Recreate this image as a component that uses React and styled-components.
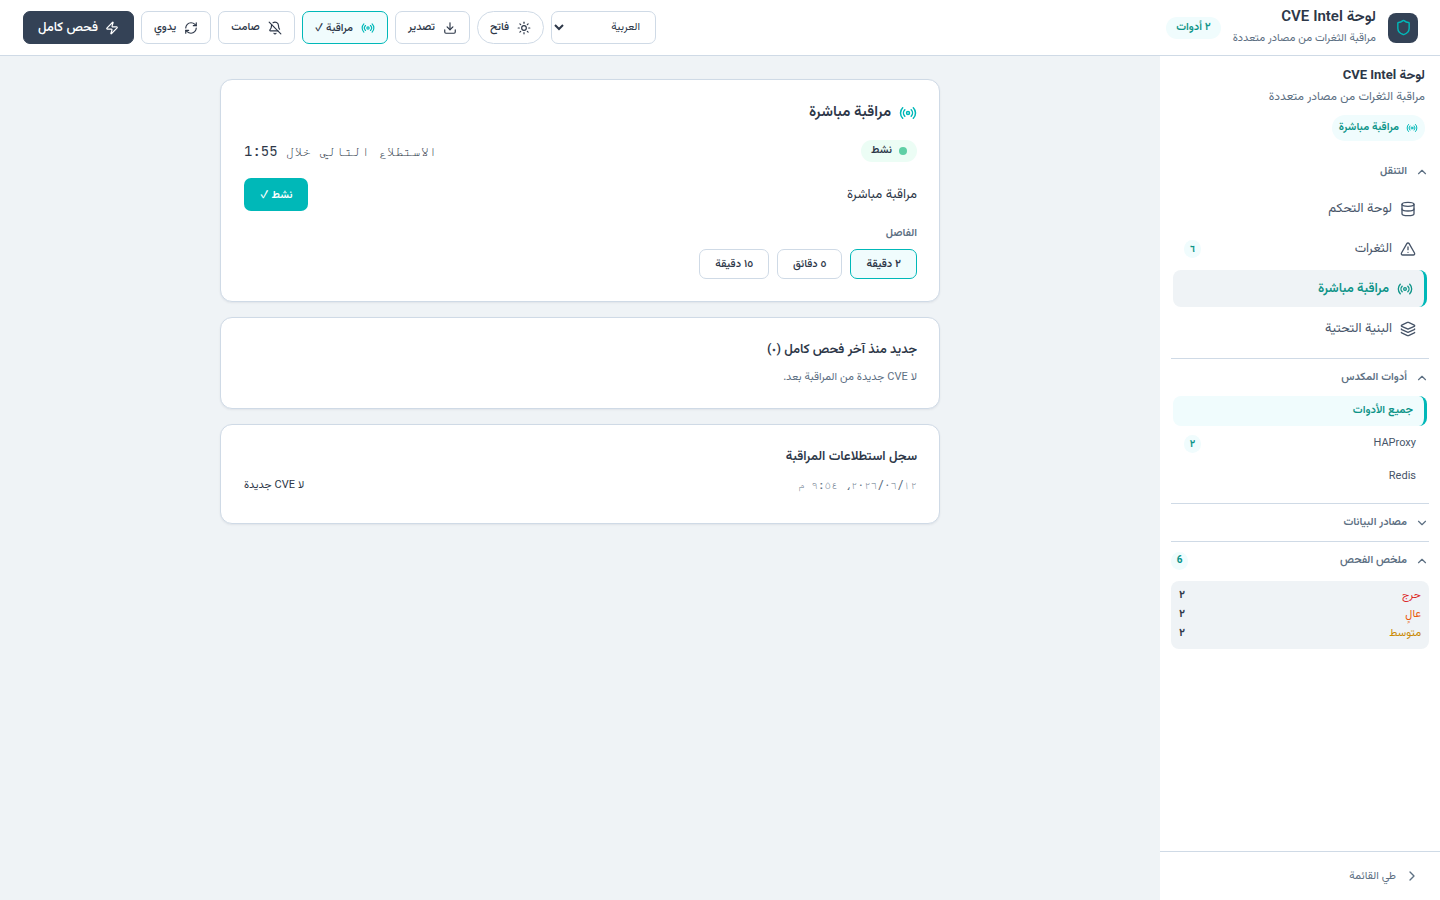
import React, { useState } from "react";
import styled, { createGlobalStyle, css } from "styled-components";
import {
  Shield, Zap, RefreshCw, BellOff, Radio, Download, Sun, Database,
  TriangleAlert, Layers, ChevronUp, ChevronDown, ChevronRight,
} from "lucide-react";

const c = {
  bg: "#eff3f6",
  panel: "#ffffff",
  border: "#cfdae6",
  ink: "#2d3748",
  dark: "#344256",
  muted: "#5d7083",
  nav: "#475569",
  teal: "#00b8b8",
  tealText: "#0d9488",
  tealBg: "#f0fcfd",
};

const GlobalStyle = createGlobalStyle`
  *, *::before, *::after { box-sizing: border-box; }
  body {
    margin: 0;
    background: ${c.bg};
    color: ${c.ink};
    font-family: Vazirmatn, "Noto Sans Math", Roboto, sans-serif;
    font-size: 13px;
    line-height: 20px;
  }
  button, select { font-family: inherit; color: inherit; cursor: pointer; }
  h1, h2, h3, p, ul, dl, dd { margin: 0; padding: 0; }
  ul { list-style: none; }
  svg { flex-shrink: 0; }
`;

const Page = styled.div`
  min-height: 100vh;
  display: flex;
  flex-direction: column;
`;

const Header = styled.header`
  display: flex;
  align-items: center;
  justify-content: space-between;
  min-height: 56px;
  padding: 0 22px 0 23px;
  background: ${c.panel};
  border-bottom: 1px solid ${c.border};
`;

const Brand = styled.div`
  display: flex;
  align-items: center;
  gap: 12px;
`;

const Logo = styled.span`
  display: grid;
  place-items: center;
  width: 30px;
  height: 30px;
  border-radius: 8px;
  background: ${c.dark};
  color: ${c.teal};
`;

const BrandTitle = styled.h1`
  font-size: 15px;
  line-height: 22px;
  font-weight: 600;
`;

const Subtitle = styled.p`
  font-size: ${(p) => (p.$large ? 12 : 11)}px;
  line-height: 20px;
  color: ${c.muted};
`;

const Pill = styled.span`
  display: inline-flex;
  align-items: center;
  gap: 7px;
  height: ${(p) => p.$height || 22}px;
  padding: 0 ${(p) => p.$pad || 10}px;
  border-radius: 999px;
  font-size: 11px;
  font-weight: 600;
  background: ${(p) => (p.$green ? "#ecfdf5" : c.tealBg)};
  color: ${(p) => (p.$green ? c.ink : c.tealText)};
  svg { color: ${c.teal}; }
`;

const Toolbar = styled.div`
  display: flex;
  align-items: center;
  gap: 7px;
`;

const ToolButton = styled.button`
  display: inline-flex;
  align-items: center;
  justify-content: center;
  gap: 8px;
  height: 33px;
  padding: 0 12px;
  border: 1px solid ${c.border};
  border-radius: ${(p) => (p.$round ? 999 : 7)}px;
  background: ${c.panel};
  font-size: 11px;
  font-weight: 500;
  ${(p) => p.$active && css`
    border-color: ${c.teal};
    background: ${c.tealBg};
    svg { color: ${c.teal}; }
  `}
  ${(p) => p.$primary && css`
    gap: 7px;
    padding: 0 14px;
    border-color: ${c.dark};
    background: ${c.dark};
    color: #fff;
    font-size: 13px;
  `}
`;

const LanguageSelect = styled.select`
  width: 105px;
  height: 33px;
  padding: 0 11px 0 0;
  border: 1px solid ${c.border};
  border-radius: 7px;
  background: ${c.panel};
  font-size: 11px;
`;

const Body = styled.div`
  flex: 1;
  display: flex;
`;

const Sidebar = styled.aside`
  display: flex;
  flex-direction: column;
  flex: 0 0 280px;
  background: ${c.panel};
`;

const SideIntro = styled.div`
  padding: 10px 15px 12px;
  display: flex;
  flex-direction: column;
  align-items: flex-start;
  gap: 1px;
`;

const SideTitle = styled.h2`
  font-size: 13px;
  line-height: 20px;
  font-weight: 700;
`;

const PillRow = styled.div`
  display: flex;
  padding-top: 7px;
`;

const Section = styled.section`
  margin: 0 11px;
  padding-bottom: ${(p) => p.$bottom || 0}px;
  border-top: ${(p) => (p.$ruled ? `1px solid ${c.border}` : "0")};
`;

const SectionToggle = styled.button`
  display: flex;
  align-items: center;
  gap: 8px;
  width: 100%;
  height: 37px;
  padding: 0;
  border: 0;
  background: none;
  color: ${c.muted};
  font-size: 11px;
  font-weight: 600;
`;

const Count = styled.span`
  display: grid;
  place-items: center;
  min-width: 17px;
  height: 18px;
  margin-inline-start: auto;
  border-radius: 999px;
  background: ${c.tealBg};
  color: ${c.tealText};
  font-size: 10px;
  font-weight: 700;
`;

const NavList = styled.ul`
  display: flex;
  flex-direction: column;
  gap: 3px;
  padding: 0 2px;
`;

const NavLink = styled.a`
  display: flex;
  align-items: center;
  gap: 8px;
  height: ${(p) => (p.$small ? 30 : 37)}px;
  padding: 0 11px;
  border-radius: 8px;
  color: ${c.nav};
  font-size: ${(p) => (p.$small ? 11 : 13)}px;
  text-decoration: none;
  ${(p) => p.$current && css`
    border-right: 3px solid ${c.teal};
    background: ${p.$small ? c.tealBg : c.bg};
    color: ${c.tealText};
    font-weight: 600;
  `}
`;

const Summary = styled.dl`
  margin-top: 2px;
  padding: 5px 8px 6px;
  border-radius: 8px;
  background: ${c.bg};
  font-size: 11px;
`;

const SummaryRow = styled.div`
  display: flex;
  justify-content: space-between;
  line-height: 19px;
  dt { color: ${(p) => p.$color}; }
  dd { font-weight: 700; }
`;

const SideFooter = styled.div`
  margin-top: auto;
  padding: 6px 20px;
  border-top: 1px solid ${c.border};
`;

const CollapseButton = styled.button`
  display: flex;
  align-items: center;
  gap: 8px;
  height: 36px;
  padding: 0;
  border: 0;
  background: none;
  color: ${c.muted};
  font-size: 11px;
`;

const Main = styled.main`
  flex: 1;
  min-width: 0;
  padding: 23px 24px;
`;

const Stack = styled.div`
  display: flex;
  flex-direction: column;
  gap: 15px;
  max-width: 720px;
  margin: 0 auto;
`;

const Card = styled.section`
  padding: 22px 22px 22px 23px;
  border: 1px solid ${c.border};
  border-radius: 12px;
  background: ${c.panel};
  box-shadow: 0 1px 2px rgba(45, 55, 72, 0.08);
`;

const CardTitle = styled.h2`
  display: flex;
  align-items: center;
  gap: 8px;
  font-size: ${(p) => (p.$large ? 15 : 13)}px;
  line-height: ${(p) => (p.$large ? 22 : 20)}px;
  font-weight: 600;
  svg { color: ${c.teal}; }
`;

const Row = styled.div`
  display: flex;
  align-items: center;
  justify-content: space-between;
  margin-top: 16px;
`;

const PollRow = styled.li`
  display: flex;
  align-items: center;
  justify-content: space-between;
  margin-top: 3px;
  padding: 8px 0;
  font-size: 11px;
  line-height: 15px;
`;

const Dot = styled.span`
  width: 8px;
  height: 8px;
  border-radius: 50%;
  background: #5fcfa5;
`;

const Mono = styled.span`
  font-family: "JetBrains Mono", FreeMono, "DejaVu Sans Mono", monospace;
  font-size: ${(p) => (p.$small ? 11 : 14)}px;
  color: ${(p) => (p.$small ? c.muted : c.ink)};
`;

const StateButton = styled.button`
  height: 33px;
  padding: 0 16px;
  border: 0;
  border-radius: 7px;
  background: ${c.teal};
  color: #fff;
  font-size: 11px;
  font-weight: 600;
`;

const FieldLabel = styled.p`
  margin-top: 13px;
  font-size: 11px;
  line-height: 20px;
  font-weight: 600;
  color: ${c.muted};
`;

const Intervals = styled.div`
  display: flex;
  gap: 8px;
  margin-top: 5px;
`;

const IntervalButton = styled(ToolButton)`
  height: 30px;
  padding: 0 15px;
  font-weight: ${(p) => (p.$active ? 600 : 500)};
`;

const Note = styled.p`
  margin-top: 9px;
  font-size: 11px;
  line-height: 17px;
  color: ${c.muted};
`;

function Group({ title, open: initial = true, count, ruled, bottom, children }) {
  const [open, setOpen] = useState(initial);
  const Icon = open ? ChevronUp : ChevronDown;
  return (
    <Section $ruled={ruled} $bottom={bottom}>
      <SectionToggle type="button" aria-expanded={open} onClick={() => setOpen(!open)}>
        <Icon size={14} />
        {title}
        {count && <Count>{count}</Count>}
      </SectionToggle>
      {open && children}
    </Section>
  );
}

const pages = [
  { label: "لوحة التحكم", icon: Database },
  { label: "الثغرات", icon: TriangleAlert, count: "٦" },
  { label: "مراقبة مباشرة", icon: Radio, current: true },
  { label: "البنية التحتية", icon: Layers },
];

const tools = [
  { label: "جميع الأدوات", current: true },
  { label: "HAProxy", count: "٢" },
  { label: "Redis" },
];

const severities = [
  { label: "حرج", color: "#dc2626" },
  { label: "عالٍ", color: "#ea580c" },
  { label: "متوسط", color: "#ca8a04" },
];

const intervals = ["٢ دقيقة", "٥ دقائق", "١٥ دقيقة"];

export default function App() {
  const [selected, setSelected] = useState(0);
  return (
    <Page dir="rtl" lang="ar">
      <GlobalStyle />
      <Header>
        <Brand>
          <Logo><Shield size={17} /></Logo>
          <div>
            <BrandTitle>لوحة CVE Intel</BrandTitle>
            <Subtitle>مراقبة الثغرات من مصادر متعددة</Subtitle>
          </div>
          <Pill>٢ أدوات</Pill>
        </Brand>
        <Toolbar>
          <LanguageSelect aria-label="اللغة" defaultValue="ar">
            <option value="ar">العربية</option>
            <option value="en">English</option>
          </LanguageSelect>
          <ToolButton type="button" $round><Sun size={14} />فاتح</ToolButton>
          <ToolButton type="button"><Download size={14} />تصدير</ToolButton>
          <ToolButton type="button" $active><Radio size={14} />مراقبة ✓</ToolButton>
          <ToolButton type="button"><BellOff size={14} />صامت</ToolButton>
          <ToolButton type="button"><RefreshCw size={14} />يدوي</ToolButton>
          <ToolButton type="button" $primary><Zap size={14} />فحص كامل</ToolButton>
        </Toolbar>
      </Header>
      <Body>
        <Sidebar>
          <SideIntro>
            <SideTitle>لوحة CVE Intel</SideTitle>
            <Subtitle $large>مراقبة الثغرات من مصادر متعددة</Subtitle>
            <PillRow><Pill $height={26} $pad={7}><Radio size={12} />مراقبة مباشرة</Pill></PillRow>
          </SideIntro>
          <Group title="التنقل" bottom={11}>
            <NavList>
              {pages.map(({ label, icon: Icon, count, current }) => (
                <li key={label}>
                  <NavLink href="#" $current={current} aria-current={current ? "page" : undefined}>
                    <Icon size={16} />
                    {label}
                    {count && <Count>{count}</Count>}
                  </NavLink>
                </li>
              ))}
            </NavList>
          </Group>
          <Group title="أدوات المكدس" ruled bottom={11}>
            <NavList>
              {tools.map(({ label, count, current }) => (
                <li key={label}>
                  <NavLink href="#" $small $current={current}>
                    {label}
                    {count && <Count>{count}</Count>}
                  </NavLink>
                </li>
              ))}
            </NavList>
          </Group>
          <Group title="مصادر البيانات" ruled open={false} />
          <Group title="ملخص الفحص" ruled count="6">
            <Summary>
              {severities.map(({ label, color }) => (
                <SummaryRow key={label} $color={color}>
                  <dt>{label}</dt>
                  <dd>٢</dd>
                </SummaryRow>
              ))}
            </Summary>
          </Group>
          <SideFooter>
            <CollapseButton type="button"><ChevronRight size={16} />طي القائمة</CollapseButton>
          </SideFooter>
        </Sidebar>
        <Main>
          <Stack>
            <Card>
              <CardTitle $large><Radio size={18} />مراقبة مباشرة</CardTitle>
              <Row>
                <Pill $green><Dot />نشط</Pill>
                <Mono>الاستطلاع التالي خلال 1:55</Mono>
              </Row>
              <Row>
                <span>مراقبة مباشرة</span>
                <StateButton type="button" aria-pressed="true">نشط ✓</StateButton>
              </Row>
              <FieldLabel id="interval">الفاصل</FieldLabel>
              <Intervals role="group" aria-labelledby="interval">
                {intervals.map((label, i) => (
                  <IntervalButton
                    key={label}
                    type="button"
                    $active={i === selected}
                    aria-pressed={i === selected}
                    onClick={() => setSelected(i)}
                  >
                    {label}
                  </IntervalButton>
                ))}
              </Intervals>
            </Card>
            <Card>
              <CardTitle>جديد منذ آخر فحص كامل (٠)</CardTitle>
              <Note>لا CVE جديدة من المراقبة بعد.</Note>
            </Card>
            <Card>
              <CardTitle>سجل استطلاعات المراقبة</CardTitle>
              <ul>
                <PollRow>
                  <Mono $small>١٢‏/٠٦‏/٢٠٢٦، ٩:٥٤ م</Mono>
                  <span>لا CVE جديدة</span>
                </PollRow>
              </ul>
            </Card>
          </Stack>
        </Main>
      </Body>
    </Page>
  );
}
